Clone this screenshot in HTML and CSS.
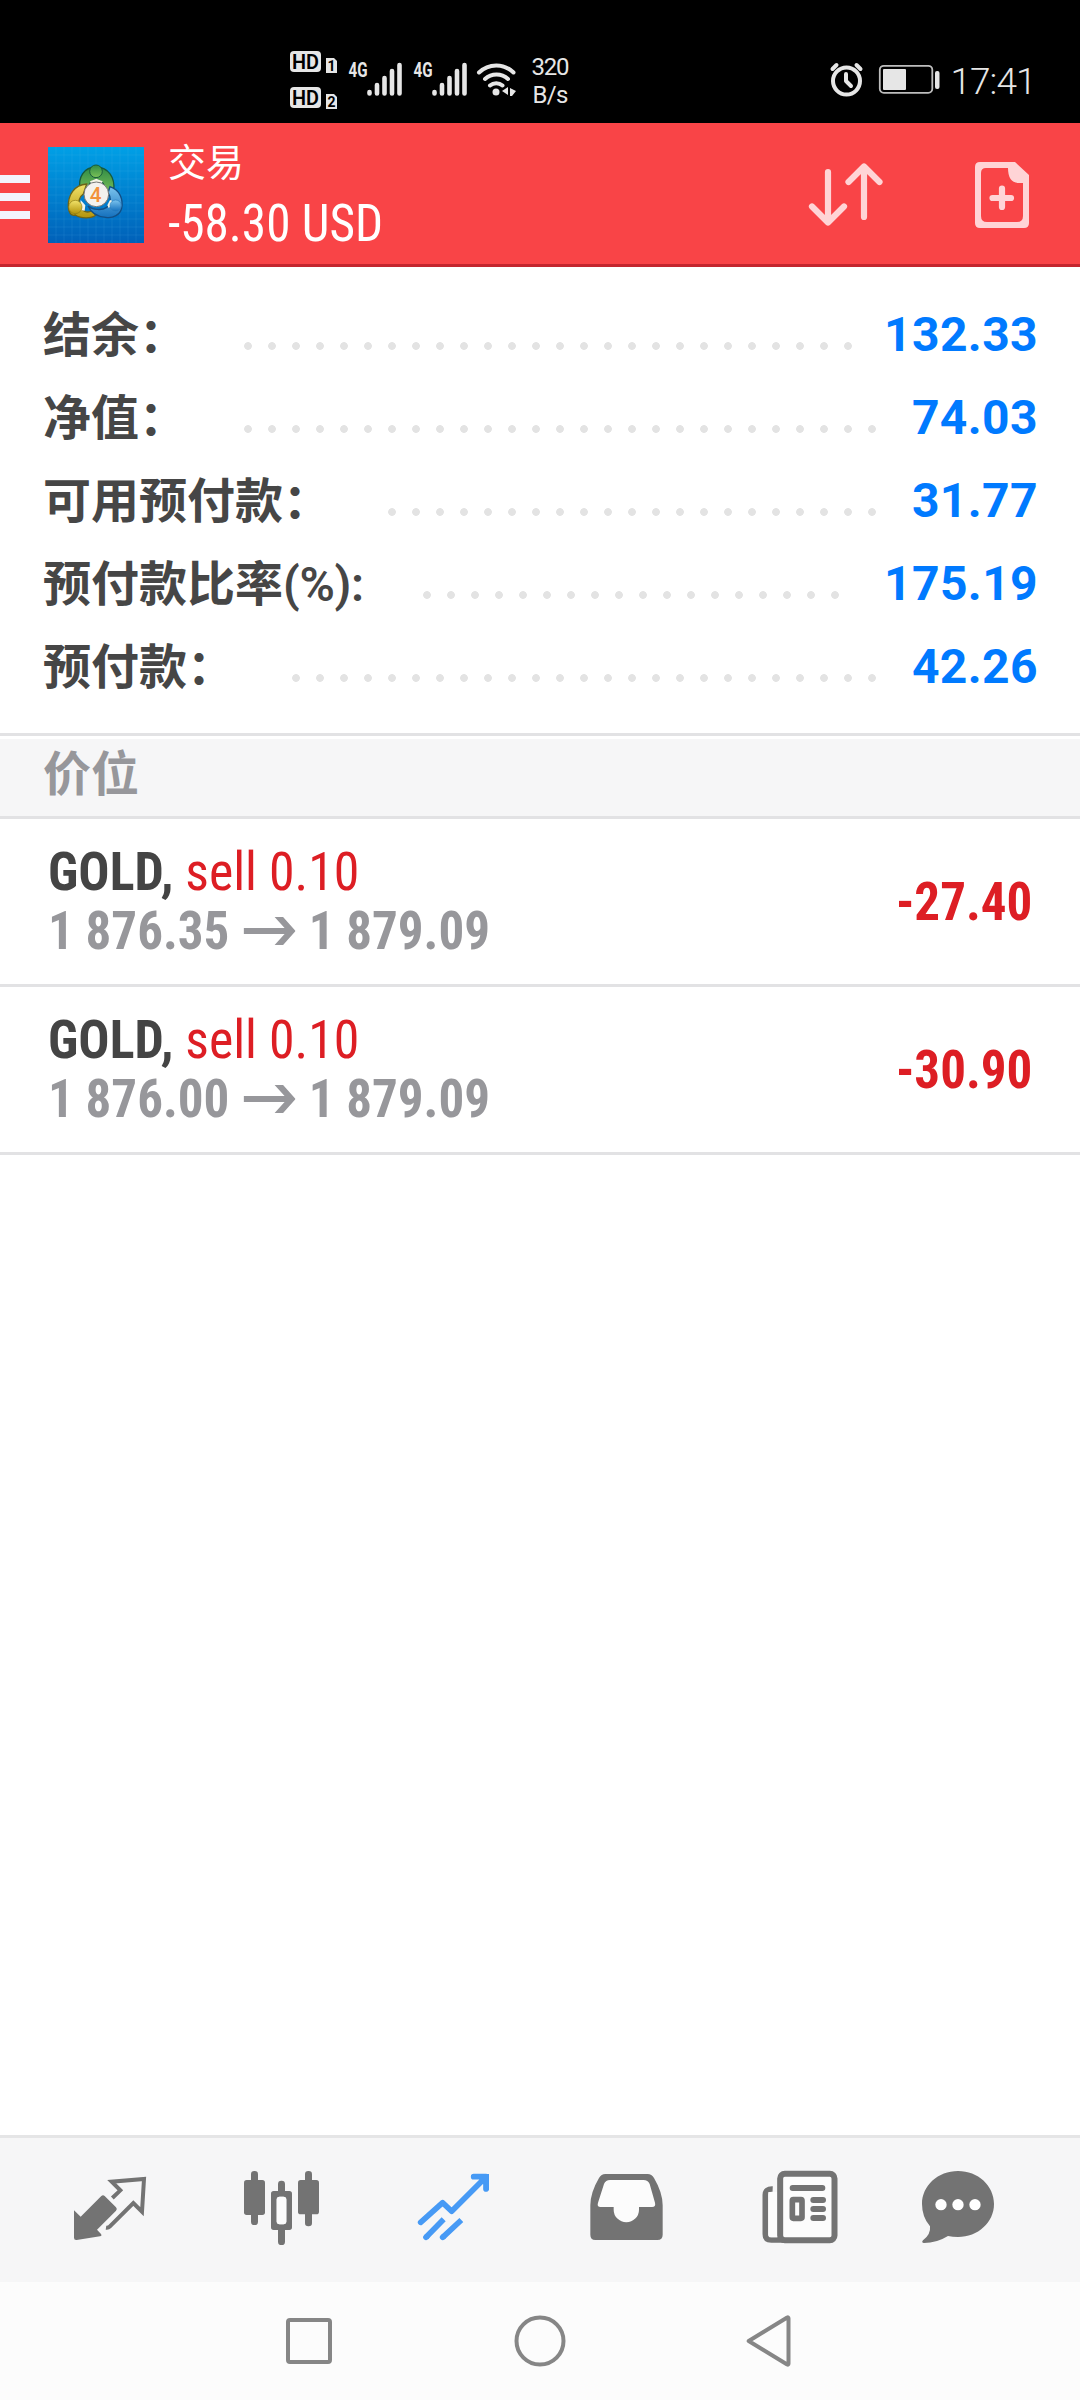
FILE: index.html
```html
<!DOCTYPE html>
<html lang="zh-CN">
<head>
<meta charset="utf-8">
<title>交易</title>
<link rel="stylesheet" href="styles.css">
</head>
<body>
<div class="screen">
  <div class="status">
    <svg class="status-left" viewBox="280 0 300 123" width="300" height="123">
      <g fill="#e6e6e6">
        <rect x="290" y="51" width="31" height="21" rx="4"/>
        <path d="M326 58h8l3 3v12h-11z"/>
        <rect x="290" y="87" width="31" height="21" rx="4"/>
        <path d="M326 94h8l3 3v12h-11z"/>
      </g>
      <g class="hd" text-anchor="middle">
        <text x="305.500" y="69" textLength="27" lengthAdjust="spacingAndGlyphs">HD</text>
        <text x="305.500" y="105" textLength="27" lengthAdjust="spacingAndGlyphs">HD</text>
        <text class="sim" x="331.500" y="71">1</text>
        <text class="sim" x="331.500" y="107">2</text>
      </g>
      <g class="net">
        <text x="348.500" y="77" textLength="19" lengthAdjust="spacingAndGlyphs">4G</text>
        <text x="413.500" y="77" textLength="19" lengthAdjust="spacingAndGlyphs">4G</text>
      </g>
      <g stroke="#e6e6e6" stroke-width="4.600" stroke-linecap="round">
        <path d="M369.500 92v1.500M377 85v8.500M384.500 78v15.500M392 71v22.500M399.500 65v28.500"/>
        <path d="M434.500 92v1.500M442 85v8.500M449.500 78v15.500M457 71v22.500M464.500 65v28.500"/>
      </g>
      <g fill="none" stroke="#e6e6e6" stroke-width="4" stroke-linecap="round">
        <path d="M479 72.500a24.500 24.500 0 0 1 34.500 0M485 79a17 17 0 0 1 23 0M490 85.500a9.500 9.500 0 0 1 12.500 0"/>
      </g>
      <g fill="#e6e6e6">
        <circle cx="496" cy="92" r="3.500"/>
        <path d="M508 87v8l-6-4zM510 88l6 3-4 5h-2z"/>
      </g>
      <g class="rate" text-anchor="middle">
        <text x="550.500" y="75" textLength="38">320</text>
        <text x="550.500" y="103" textLength="36">B/s</text>
      </g>
    </svg>
    <svg class="status-right" viewBox="820 0 220 123" width="220" height="123">
      <g fill="none" stroke="#e6e6e6" stroke-width="4" stroke-linecap="round" stroke-linejoin="round">
        <circle cx="846.500" cy="81" r="13.500"/>
        <path d="M846 74v7l5 5M832.500 69l4-4M856.500 65l4 4"/>
      </g>
      <rect x="879.800" y="65.800" width="52.500" height="27" rx="4" fill="none" stroke="#bdbdbd" stroke-width="1.800"/>
      <rect x="883" y="69" width="23" height="21" rx="1" fill="#e6e6e6"/>
      <rect x="935" y="71" width="4.500" height="18" rx="2" fill="#e6e6e6"/>
      <text class="clock" x="950.500" y="94" textLength="86">17:41</text>
    </svg>
  </div>

  <header class="appbar">
    <div class="menu"><i></i><i></i><i></i></div>
    <svg class="logo" viewBox="144 81 288 288" width="96" height="96">
      <defs>
        <linearGradient id="bg" x1="0" y1="0" x2="0" y2="1"><stop offset="0" stop-color="#00a0e6"/><stop offset="1" stop-color="#0060b8"/></linearGradient>
        <linearGradient id="gr" x1="0" y1="0" x2="0" y2="1"><stop offset="0" stop-color="#2f8a45"/><stop offset="1" stop-color="#7cc257"/></linearGradient>
        <linearGradient id="ye" x1="0" y1="0" x2="0" y2="1"><stop offset="0" stop-color="#f2e36a"/><stop offset="1" stop-color="#b3940c"/></linearGradient>
        <linearGradient id="bl" x1="0" y1="0" x2="0" y2="1"><stop offset="0" stop-color="#7cc4ee"/><stop offset="1" stop-color="#1470bd"/></linearGradient>
      </defs>
      <path fill="url(#bg)" d="M144 81h288v288h-288z"/>
      <path stroke="#5cc0f2" stroke-opacity=".2" stroke-width="2" fill="none" d="M168 81v288M192 81v288M216 81v288M240 81v288M264 81v288M288 81v288M312 81v288M336 81v288M360 81v288M384 81v288M408 81v288M144 105h288M144 129h288M144 153h288M144 177h288M144 201h288M144 225h288M144 249h288M144 273h288M144 297h288M144 321h288M144 345h288"/>
      <path fill="url(#gr)" stroke="#175a3c" stroke-width="4" d="M240 208c-6-38 12-66 48-67 38 1 58 32 53 70-7 14-22 18-30 6 8-20-2-34-22-37-18 3-24 14-24 29-4 8-20 10-25-1z"/>
      <path fill="url(#ye)" stroke="#6e6417" stroke-width="4" d="M205 262c-2-38 18-67 55-70l-10 30c-12 8-16 24-12 36 8 16 24 22 36 15l14 12c-14 12-46 11-62 0-12 4-20-6-21-23z"/>
      <path fill="url(#bl)" stroke="#124f86" stroke-width="4" d="M264 258c14 12 42 14 56 4 14-10 14-30 4-44l6-18c30 10 40 38 35 64-4 20-26 32-48 28-26-2-44-14-53-34z"/>
      <path fill="#f4f4e6" d="M270 184l19-8 19 8-5 12h-28zM242 240l14 16-2 16-14-2zM322 256l8-16 6 2 0 14-10 8z"/>
      <circle cx="288" cy="154" r="19" fill="url(#gr)" stroke="#175a3c" stroke-width="3"/>
      <circle cx="226" cy="261" r="20" fill="url(#ye)" stroke="#8b7a13" stroke-width="2"/>
      <circle cx="347" cy="257" r="17" fill="url(#bl)" stroke="#2b7fc0" stroke-width="2"/>
      <circle cx="289" cy="223" r="37" fill="#f3f1ee" stroke="#777" stroke-width="3"/>
      <text class="four" x="287" y="245" text-anchor="middle">4</text>
    </svg>
    <div class="titles">
      <div class="title">交易</div>
      <div class="balance cond">-58.30 USD</div>
    </div>
    <svg class="actions" viewBox="780 123 300 141" width="300" height="141">
      <g fill="none" stroke="#ffd4d6" stroke-width="6.200" stroke-linecap="round" stroke-linejoin="round">
        <path d="M828 172v50M812 206.500l16 16 16-16M864 217v-50M848.500 182l15.500-15.500 15.500 15.500"/>
        <path d="M992.500 198h18.500M1002 188.500v18.500"/>
      </g>
      <path fill="#ffd4d6" fill-rule="evenodd" d="M980 162h35l14 13v48q0 5-5 5h-44q-5 0-5-5v-56q0-5 5-5zM986 168q-5 0-5 5v43q0 6 6 6h30q6 0 6-6v-33h-4q-11 0-11-15z"/>
    </svg>
  </header>

  <section class="summary">
    <div class="line"><span class="label">结余：</span><span class="dots d26"></span><span class="num">132.33</span></div>
    <div class="line"><span class="label">净值：</span><span class="dots d27"></span><span class="num">74.03</span></div>
    <div class="line"><span class="label">可用预付款：</span><span class="dots d21"></span><span class="num">31.77</span></div>
    <div class="line"><span class="label">预付款比率<span class="latin">(%):</span></span><span class="dots d18"></span><span class="num">175.19</span></div>
    <div class="line"><span class="label">预付款：</span><span class="dots d25"></span><span class="num">42.26</span></div>
  </section>

  <h2 class="section-title">价位</h2>

  <div class="position">
    <div class="info">
      <div class="deal cond"><b class="symbol">GOLD,</b> <span class="side">sell 0.10</span></div>
      <div class="prices cond"><span>1 876.35</span><svg class="arrow" viewBox="0 0 52 28" width="55" height="28" preserveAspectRatio="none"><path d="M0 11h41l-10-11h8.500l12.500 14-12.500 14h-8.500l10-11h-41z" fill="#97979b"/></svg><span>1 879.09</span></div>
    </div>
    <div class="profit cond">-27.40</div>
  </div>
  <div class="position">
    <div class="info">
      <div class="deal cond"><b class="symbol">GOLD,</b> <span class="side">sell 0.10</span></div>
      <div class="prices cond"><span>1 876.00</span><svg class="arrow" viewBox="0 0 52 28" width="55" height="28" preserveAspectRatio="none"><path d="M0 11h41l-10-11h8.500l12.500 14-12.500 14h-8.500l10-11h-41z" fill="#97979b"/></svg><span>1 879.09</span></div>
    </div>
    <div class="profit cond">-30.90</div>
  </div>

  <nav class="tabs">
    <svg viewBox="-48 54 516 432">
      <path fill="#737373" d="M102 271l20 19 62-62q5-5 10 0l34 34q5 5 0 10l-57 57 12 13q4 6-3 7l-70 11q-8 1-8-7z"/>
      <path fill="none" stroke="#737373" stroke-width="12" d="M217 234l24-23-26-26 97-8-6 98-26-26-71 71q-4 4-11 3"/>
    </svg>
    <svg viewBox="468 54 516 432">
      <g fill="#737373">
        <rect x="612" y="180" width="63" height="105" rx="8"/><rect x="633" y="153" width="21" height="162" rx="10"/>
        <rect x="774" y="180" width="63" height="103" rx="8"/><rect x="795" y="153" width="21" height="166" rx="10"/>
        <rect x="714" y="182" width="21" height="40" rx="10"/><rect x="714" y="318" width="21" height="57" rx="10"/>
        <path fill-rule="evenodd" d="M701 213h47q8 0 8 8v101q0 8-8 8h-47q-8 0-8-8v-101q0-8 8-8zM719 230q-9 0-9 9v65q0 9 9 9h11q9 0 9-9v-65q0-9-9-9z"/>
      </g>
      <rect x="710" y="230" width="29" height="83" rx="9" fill="#fcfcfc"/>
    </svg>
    <svg viewBox="984 54 516 432">
      <g fill="none" stroke="#479af5" stroke-width="17" stroke-linecap="round" stroke-linejoin="round">
        <path d="M1142 307l66-59 27 26 96-96M1301 170h37v37"/>
        <path stroke-linecap="butt" d="M1158 352l53-54M1208 352l56-52"/>
        <path d="M1158 352l2-2M1208 352l2-2"/>
        <path fill="#479af5" stroke="none" d="M1305 162h42v50z"/>
      </g>
    </svg>
    <svg viewBox="0 54 516 432">
      <path fill="#737373" d="M196 162h127q12 0 19 12 26 44 26 82v88q0 16-16 16h-186q-15 0-15-16v-88q0-38 26-82 7-12 19-12z"/>
      <path fill="#fcfcfc" d="M210 180h100q14 0 19 12l16 56q3 13-9 13h-39v8a37.500 37.500 0 0 1-76 0v-8h-39q-12 0-8-13l18-56q5-12 18-12z"/>
    </svg>
    <svg viewBox="516 54 516 432">
      <path fill="none" stroke="#737373" stroke-width="17" d="M698 207q-22-1-22 18v117q0 18 18 18h40"/>
      <path fill="#fcfcfc" d="M685 216h27v136h-20q-7 0-7-8z"/>
      <rect x="720.500" y="161.500" width="163" height="199" rx="14" fill="#fcfcfc" stroke="#737373" stroke-width="18"/>
      <path stroke="#737373" stroke-width="18" stroke-linecap="round" d="M758 204h89M820 240h29M820 267h29M820 294h29"/>
      <rect x="757" y="239" width="29" height="56" rx="3" fill="#fcfcfc" stroke="#737373" stroke-width="17"/>
    </svg>
    <svg viewBox="1032 54 516 432">
      <path fill="#737373" d="M1254 153c60 0 108 44 108 99s-48 99-108 99q-16 0-30-3-34 21-72 21-9-1-3-8 24-18 21-42-24-28-24-67c0-55 48-99 108-99z"/>
      <g fill="#fff"><circle cx="1203" cy="254" r="17"/><circle cx="1254" cy="254" r="17"/><circle cx="1305" cy="254" r="17"/></g>
    </svg>
  </nav>

  <div class="sysnav">
    <svg viewBox="195 2282 230 118"><rect x="288" y="2320" width="42" height="42" rx="2" fill="none" stroke="#868686" stroke-width="4"/></svg>
    <svg viewBox="425 2282 230 118"><circle cx="540" cy="2341" r="23.500" fill="none" stroke="#868686" stroke-width="4"/></svg>
    <svg viewBox="655 2282 230 118"><path d="M748.700 2341l38.500-23.500q1.300-.5 1.300 1v45q0 1.500-1.300 1z" fill="none" stroke="#868686" stroke-width="4" stroke-linejoin="round"/></svg>
  </div>
</div>
</body>
</html>
```
FILE: styles.css
```css
* { box-sizing: border-box; }

body {
  margin: 0;
  background: #fff;
  font-family: Roboto, "Noto Sans CJK SC", sans-serif;
}

svg { display: block; }

.screen {
  width: 1080px;
  height: 2400px;
  display: flex;
  flex-direction: column;
  overflow: hidden;
}

/* condensed face, narrowed a little further towards its left edge */
.cond {
  font-family: "Roboto Condensed", Roboto, sans-serif;
  font-stretch: 75%;
  white-space: nowrap;
  transform-origin: left center;
}

/* status bar */
.status {
  height: 123px;
  flex: none;
  padding: 0 40px 0 280px;
  display: flex;
  justify-content: space-between;
  background: #000;
}

.status text { fill: #e6e6e6; }
.status .hd text { fill: #000; font-size: 21px; font-weight: 600; }
.status .hd .sim { font-size: 14px; font-weight: 700; }
.status .net text { font-size: 20px; font-weight: 700; }
.status .rate text { font-size: 24px; }
.status .clock { font-size: 37px; font-weight: 300; }

/* app bar */
.appbar {
  height: 144px;
  flex: none;
  display: flex;
  background: #f94447;
  border-bottom: 3px solid #c3262e;
  color: #fff;
}

.menu {
  width: 30px;
  margin-right: 18px;
  padding-top: 52px;
  display: flex;
  flex-direction: column;
  gap: 10px;
}

.menu i { height: 8px; background: #f3f3fc; }
.logo { margin-top: 24px; }
.four { fill: #f2913a; font-size: 62px; font-weight: 500; }
.titles { margin-left: 24px; flex: 1; }
.title { padding-top: 17px; height: 70px; font-size: 38px; line-height: 46px; }
.balance { font-size: 51px; line-height: 61px; transform: scaleX(.966); }

/* account summary */
.summary {
  height: 469px;
  flex: none;
  padding: 26px 42px 0 43px;
  border-bottom: 3px solid #e2e2e4;
}

.line { height: 83px; display: flex; align-items: center; }
.label { padding-top: 2px; font-size: 48px; line-height: 83px; font-weight: 700; color: #464646; white-space: nowrap; }
.latin { font-weight: 600; letter-spacing: -.3px; }

.dots {
  height: 8px;
  margin: 22px 0 0 auto;
  background: radial-gradient(circle, #e3e3e3 3.500px, transparent 4.200px) 0 0 / 24px 8px repeat-x;
}

.d18 { width: 432px; margin-right: 37px; }
.d21 { width: 504px; }
.d25 { width: 600px; }
.d26 { width: 624px; margin-right: 24px; }
.d27 { width: 648px; }

.num {
  width: 154px;
  font-size: 48px;
  font-weight: 700;
  letter-spacing: .4px;
  text-align: right;
  color: #007aff;
}

/* open positions */
.section-title {
  height: 83px;
  flex: none;
  margin: 0;
  padding-left: 43px;
  border-top: 3px solid #fff;
  border-bottom: 3px solid #e2e2e4;
  background: #f6f6f7;
  color: #97979b;
  font-size: 48px;
  line-height: 71px;
  font-weight: 700;
}

.position {
  height: 168px;
  flex: none;
  padding: 23px 48px 0;
  display: flex;
  justify-content: space-between;
  border-bottom: 3px solid #e2e2e4;
  font-size: 54px;
  line-height: 59px;
}

.deal { transform: scaleX(.96); }
.symbol { color: #444; font-weight: 700; }
.side { color: #dd1e24; }
.prices { display: flex; align-items: center; color: #97979b; font-weight: 700; transform: scaleX(.945); }
.arrow { margin: 0 14px 0 15px; }
.profit { padding-top: 30px; color: #dd1e24; font-weight: 700; transform: scaleX(.945); transform-origin: right center; }

/* bottom bars */
.tabs {
  height: 147px;
  flex: none;
  margin-top: auto;
  padding: 0 24px;
  display: grid;
  grid-template-columns: repeat(6, 172px);
  border-top: 3px solid #e5e5e6;
  background: #f6f6f7;
}

.tabs svg { width: 172px; height: 144px; }

.sysnav {
  height: 118px;
  flex: none;
  display: flex;
  justify-content: center;
  background: #fcfcfc;
}

.sysnav svg { width: 230px; height: 118px; }
```
